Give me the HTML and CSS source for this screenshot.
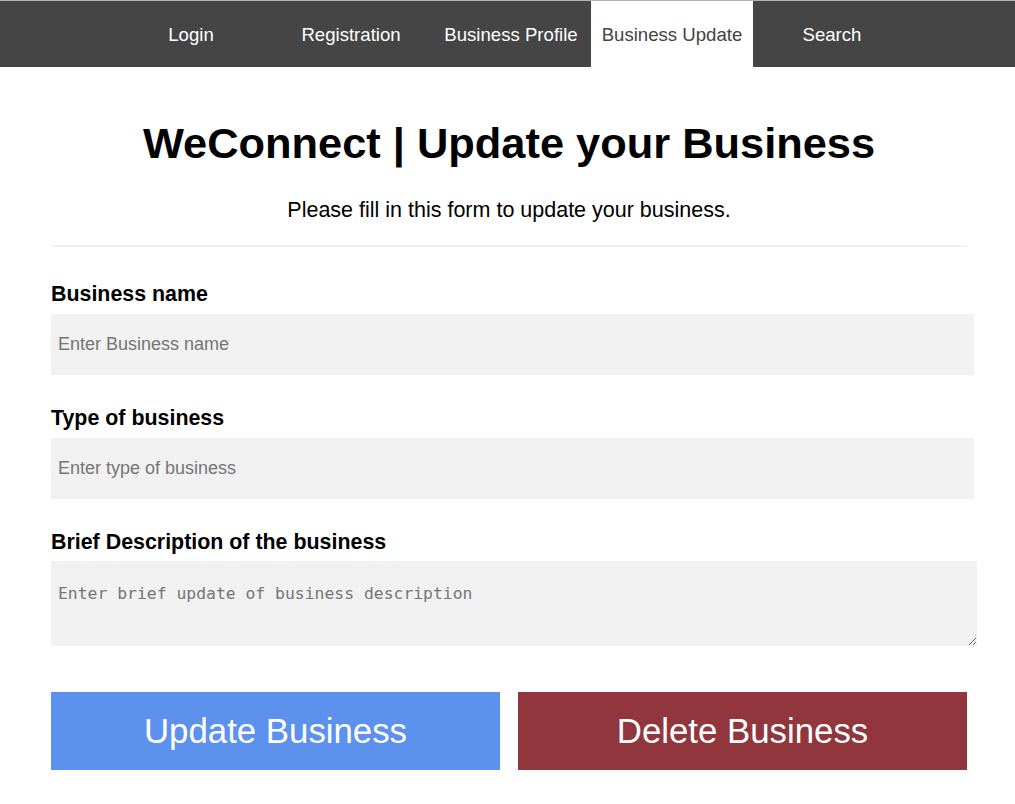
FILE: index.html
```html
<!DOCTYPE html>
<html lang="en">
<head>
<meta charset="utf-8">
<title>WeConnect | Update your Business</title>
<link rel="stylesheet" href="styles.css">
</head>
<body>
<nav class="topnav">
  <a href="#" class="nav-link">Login</a>
  <a href="#" class="nav-link">Registration</a>
  <a href="#" class="nav-link">Business Profile</a>
  <a href="#" class="nav-link active">Business Update</a>
  <a href="#" class="nav-link">Search</a>
</nav>
<main class="container">
  <h1 class="title">WeConnect | Update your Business</h1>
  <p class="subtitle">Please fill in this form to update your business.</p>
  <hr class="divider">
  <form class="form">
    <label class="label" for="bname">Business name</label>
    <input class="field" id="bname" type="text" placeholder="Enter Business name">
    <label class="label" for="btype">Type of business</label>
    <input class="field" id="btype" type="text" placeholder="Enter type of business">
    <label class="label" for="bdesc">Brief Description of the business</label>
    <textarea class="area" id="bdesc" placeholder="Enter brief update of business description"></textarea>
    <div class="actions">
      <button type="button" class="btn btn-update">Update Business</button>
      <button type="button" class="btn btn-delete">Delete Business</button>
    </div>
  </form>
</main>
</body>
</html>
```
FILE: styles.css
```css
html, body {
  margin: 0;
  padding: 0;
  background: #ffffff;
}
body {
  font-family: "Liberation Sans", Arial, sans-serif;
  color: #000;
}
.topnav {
  display: flex;
  height: 66px;
  border-top: 1px solid #b4b4b4;
  background: #454545;
  padding-left: 111px;
}
.nav-link {
  width: 160px;
  display: flex;
  align-items: center;
  justify-content: center;
  padding-top: 2px;
  color: #ffffff;
  text-decoration: none;
  font-size: 18.6px;
}
.nav-link.active {
  background: #ffffff;
  color: #444444;
  width: 162px;
}
.nav-link.active + .nav-link {
  width: 158px;
}
.container {
  width: 916px;
  margin-left: 51px;
  padding-bottom: 20px;
}
.title {
  margin: 51px 0 0;
  font-size: 43.4px;
  line-height: 50px;
  font-weight: bold;
  text-align: center;
}
.subtitle {
  margin: 29px 0 0;
  font-size: 21.5px;
  line-height: 26px;
  text-align: center;
}
.divider {
  margin: 22px 0 0;
  border: 0;
  height: 2px;
  background: #f1f1f1;
}
.form {
  display: flex;
  flex-direction: column;
}
.label {
  display: block;
  font-size: 21.4px;
  font-weight: bold;
  line-height: 25px;
  margin-top: 31px;
}
.form .label:first-child {
  margin-top: 35px;
}
.field {
  box-sizing: border-box;
  width: 923px;
  height: 61px;
  margin-top: 7px;
  border: 0;
  padding: 0 7px;
  background: #f1f1f1;
  font-family: "Liberation Sans", Arial, sans-serif;
  font-size: 18px;
  color: #000;
  outline: none;
}
.field::placeholder {
  color: #757575;
}
.area {
  display: block;
  box-sizing: border-box;
  width: 926px;
  height: 85px;
  margin-top: 6px;
  border: 0;
  padding: 23px 7px 0;
  background: #f1f1f1;
  font-family: "DejaVu Sans Mono", "Liberation Mono", monospace;
  font-size: 16.4px;
  line-height: 20px;
  color: #000;
  outline: none;
}
.area::placeholder {
  color: #757575;
}
.actions {
  display: flex;
  gap: 18px;
  margin-top: 46px;
}
.btn {
  flex: 1;
  height: 78px;
  border: 0;
  color: #ffffff;
  font-family: "Liberation Sans", Arial, sans-serif;
  font-size: 34.8px;
  cursor: pointer;
  padding: 0;
}
.btn-update {
  background: #5c92ed;
}
.btn-delete {
  background: #92363d;
}
```
